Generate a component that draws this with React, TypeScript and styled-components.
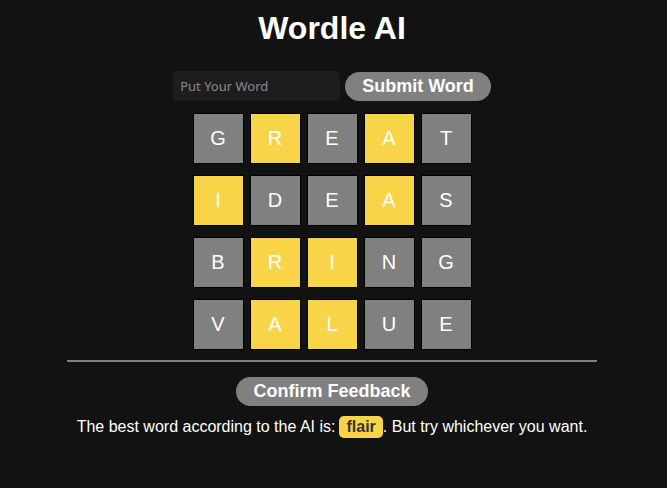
import React from "react";
import styled, { createGlobalStyle } from "styled-components";

const Global = createGlobalStyle`
  html, body { margin: 0; padding: 0; background: #121212; }
  body { font-family: "Liberation Sans", Arial, sans-serif; color: #fff; padding-right: 3px; }
`;

const Page = styled.div`
  width: 530px;
  margin: 0 auto;
  display: flex;
  flex-direction: column;
  align-items: center;
`;

const Title = styled.h1`
  margin: 10px 0 0;
  font-size: 32px;
  line-height: 37px;
  font-weight: 700;
  color: #fff;
`;

const InputRow = styled.div`
  display: flex;
  align-items: center;
  gap: 5px;
  margin-top: 24px;
`;

const WordInput = styled.input`
  box-sizing: border-box;
  width: 167px;
  height: 30px;
  border: none;
  outline: none;
  border-radius: 4px;
  background: #1d1d1f;
  padding: 0 7px;
  font-family: "Noto Sans", "Open Sans", sans-serif;
  font-size: 13px;
  color: #ddd;
  &::placeholder { color: #8a8a8a; }
`;

const PillButton = styled.button`
  box-sizing: border-box;
  height: 29px;
  padding: 0 17px;
  border: none;
  border-radius: 15px;
  background: #808080;
  color: #fff;
  font-family: "Liberation Sans", Arial, sans-serif;
  font-size: 18px;
  font-weight: 700;
  line-height: 29px;
  cursor: pointer;
`;

const Board = styled.div`
  display: grid;
  grid-template-columns: repeat(5, 51px);
  column-gap: 6px;
  row-gap: 11px;
  margin-top: 12px;
`;

const Tile = styled.div<{ $yellow?: boolean }>`
  box-sizing: border-box;
  width: 51px;
  height: 51px;
  border: 1px solid #000;
  background: ${(p) => (p.$yellow ? "#f8d548" : "#808080")};
  display: flex;
  align-items: center;
  justify-content: center;
  font-size: 20px;
  color: #fff;
`;

const Divider = styled.hr`
  width: 530px;
  height: 2px;
  border: none;
  background: #808080;
  margin: 10px 0 0;
`;

const ConfirmWrap = styled.div`
  margin-top: 15px;
`;

const Message = styled.p`
  margin: 10px 0 0;
  font-size: 16px;
  line-height: 22px;
  color: #fff;
  white-space: nowrap;
`;

const Badge = styled.span`
  display: inline-block;
  background: #f8d548;
  color: #333;
  font-weight: 700;
  padding: 0 7px;
  border-radius: 5px;
  line-height: 22px;
  margin-left: 4px;
`;

const rows: { letter: string; y: boolean }[][] = [
  [
    { letter: "G", y: false },
    { letter: "R", y: true },
    { letter: "E", y: false },
    { letter: "A", y: true },
    { letter: "T", y: false },
  ],
  [
    { letter: "I", y: true },
    { letter: "D", y: false },
    { letter: "E", y: false },
    { letter: "A", y: true },
    { letter: "S", y: false },
  ],
  [
    { letter: "B", y: false },
    { letter: "R", y: true },
    { letter: "I", y: true },
    { letter: "N", y: false },
    { letter: "G", y: false },
  ],
  [
    { letter: "V", y: false },
    { letter: "A", y: true },
    { letter: "L", y: true },
    { letter: "U", y: false },
    { letter: "E", y: false },
  ],
];

export default function App() {
  return (
    <>
      <Global />
      <Page>
        <Title>Wordle AI</Title>
        <InputRow>
          <WordInput placeholder="Put Your Word" />
          <PillButton>Submit Word</PillButton>
        </InputRow>
        <Board>
          {rows.flat().map((t, i) => (
            <Tile key={i} $yellow={t.y}>
              {t.letter}
            </Tile>
          ))}
        </Board>
        <Divider />
        <ConfirmWrap>
          <PillButton>Confirm Feedback</PillButton>
        </ConfirmWrap>
        <Message>
          The best word according to the AI is:<Badge>flair</Badge>. But try whichever you want.
        </Message>
      </Page>
    </>
  );
}
